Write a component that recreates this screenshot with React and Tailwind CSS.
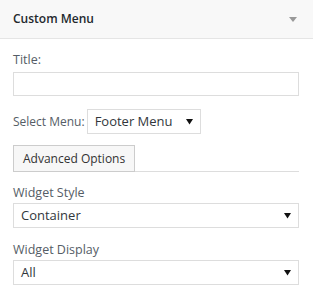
import React from 'react';

const Arrow = () => (
  <svg width="7" height="7" viewBox="0 0 7 7" className="shrink-0">
    <path d="M0 1 H7 L3.5 6.5 Z" fill="#111" />
  </svg>
);

const SelectBox = ({ value, className }) => (
  <div className={`flex items-center justify-between border border-[#dddddd] bg-white pl-[7px] pr-[7px] text-[13px] text-[#32373c] ${className}`}>
    <span>{value}</span>
    <Arrow />
  </div>
);

const App = () => {
  return (
    <div className="w-[313px] h-[293px] bg-white font-['Open_Sans',sans-serif] text-[12.5px] text-[#555d66]">
      {/* Widget header */}
      <div className="flex items-center justify-between h-[39px] bg-[#f8f8f8] border-b border-[#e5e5e5] pl-[13px] pr-[16px]">
        <span className="font-semibold text-[#23282d] text-[12px]">Custom Menu</span>
        <svg width="8" height="5" viewBox="0 0 8 5">
          <path d="M0 0 H8 L4 5 Z" fill="#999" />
        </svg>
      </div>

      <div className="px-[13px] pr-[14px]">
        <div className="mt-[12px] leading-[18px]">Title:</div>
        <div className="mt-[3px] h-[24px] border border-[#dddddd] bg-white"></div>

        <div className="mt-[13px] flex items-center gap-[2px]">
          <span className="leading-[18px] text-[12px]">Select Menu:</span>
          <SelectBox value="Footer Menu" className="w-[114px] h-[25px]" />
        </div>

        <div className="mt-[11px] border-b border-[#dddddd]">
          <div className="inline-flex items-center h-[27px] px-[9px] border border-[#cccccc] bg-[#f7f7f7] text-[#333] text-[12px] -mb-px">
            Advanced Options
          </div>
        </div>

        <div className="mt-[12px] leading-[18px]">Widget Style</div>
        <SelectBox value="Container" className="mt-px h-[25px] w-full" />

        <div className="mt-[13px] leading-[18px]">Widget Display</div>
        <SelectBox value="All" className="mt-px h-[25px] w-full" />
      </div>
    </div>
  );
};

export default App;
